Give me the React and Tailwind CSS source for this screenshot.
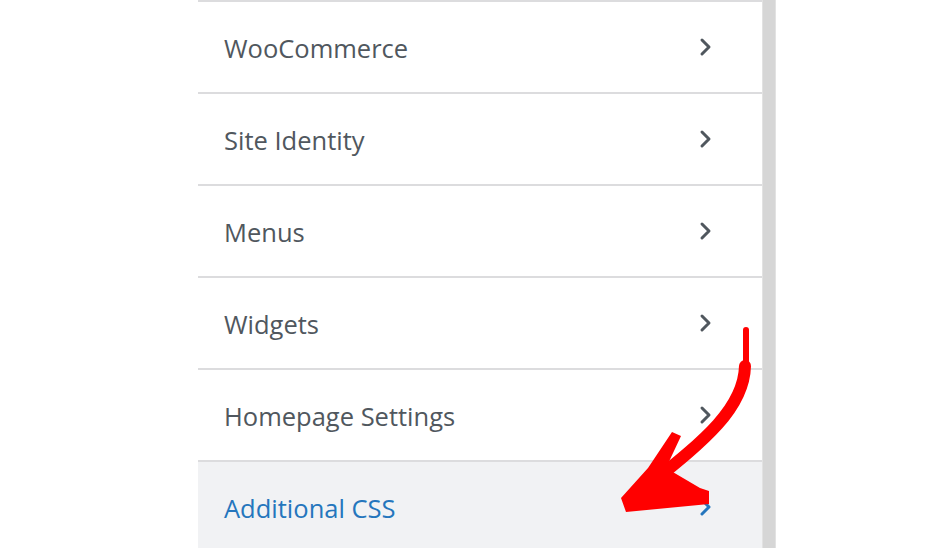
const items = ['WooCommerce', 'Site Identity', 'Menus', 'Widgets', 'Homepage Settings'];

function Chevron({ className }) {
  return (
    <svg width="16" height="20" viewBox="0 0 16 20" className={className} fill="none">
      <path d="M4 3 L11 10 L4 17" stroke="currentColor" strokeWidth="3" strokeLinecap="round" strokeLinejoin="round" />
    </svg>
  );
}

function Arrow() {
  return (
    <svg className="pointer-events-none absolute left-0 top-0" width="938" height="548" viewBox="0 0 938 548">
      <path d="M746 330 L746 368" stroke="#ff0000" strokeWidth="6" strokeLinecap="round" fill="none" />
      <path d="M745 366 C744 408 705 440 650 484" stroke="#ff0000" strokeWidth="12" strokeLinecap="round" fill="none" />
      <polygon points="672,432 681,436 666,468 700,488 709,491 709,504 626,512 621,498 648,468" fill="#ff0000" />
    </svg>
  );
}

export default function App() {
  return (
    <div className="relative h-[548px] w-[938px] overflow-hidden bg-white" style={{ fontFamily: '"Open Sans", sans-serif' }}>
      <div className="ml-[198px] flex h-full">
        <div className="w-[564px] bg-white">
          {items.map((label) => (
            <div key={label} className="flex h-[92px] items-center justify-between border-t-2 border-[#dcdcde] pl-[26px] pr-[48px] text-[25.5px] font-medium text-[#50575e]">
              <span className="pt-[2px]">{label}</span>
              <Chevron />
            </div>
          ))}
          <div className="flex h-[92px] items-center justify-between border-t-2 border-[#dcdcde] bg-[#f1f2f4] pl-[26px] pr-[48px] text-[25.5px] font-medium text-[#2576bd]">
            <span className="pt-[2px]">Additional CSS</span>
            <Chevron />
          </div>
        </div>
        <div className="w-[14px] border-x border-[#e2e2e2] bg-[#d6d6d6]" />
      </div>
      <Arrow />
    </div>
  );
}
